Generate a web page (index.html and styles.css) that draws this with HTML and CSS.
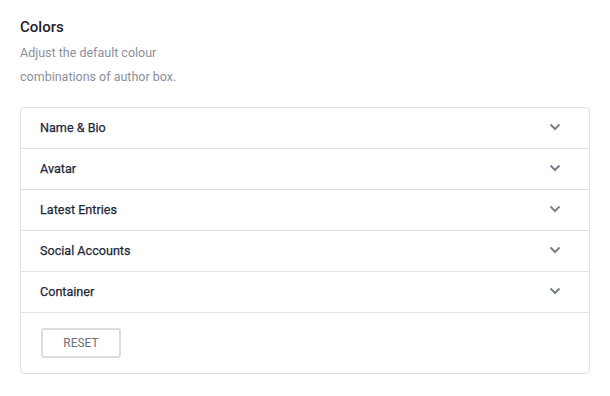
FILE: index.html
```html
<!DOCTYPE html>
<html>
<head>
<meta charset="utf-8">
<link rel="stylesheet" href="styles.css">
</head>
<body>
<div class="panel">
  <h2 class="title">Colors</h2>
  <p class="desc">Adjust the default colour<br>combinations of author box.</p>
  <div class="card">
    <div class="row"><span>Name &amp; Bio</span><svg class="chev" viewBox="0 0 12 8" width="12" height="8"><path d="M1.5 1.5 L6 6 L10.5 1.5" fill="none" stroke="currentColor" stroke-width="2"/></svg></div>
    <div class="row"><span>Avatar</span><svg class="chev" viewBox="0 0 12 8" width="12" height="8"><path d="M1.5 1.5 L6 6 L10.5 1.5" fill="none" stroke="currentColor" stroke-width="2"/></svg></div>
    <div class="row"><span>Latest Entries</span><svg class="chev" viewBox="0 0 12 8" width="12" height="8"><path d="M1.5 1.5 L6 6 L10.5 1.5" fill="none" stroke="currentColor" stroke-width="2"/></svg></div>
    <div class="row"><span>Social Accounts</span><svg class="chev" viewBox="0 0 12 8" width="12" height="8"><path d="M1.5 1.5 L6 6 L10.5 1.5" fill="none" stroke="currentColor" stroke-width="2"/></svg></div>
    <div class="row"><span>Container</span><svg class="chev" viewBox="0 0 12 8" width="12" height="8"><path d="M1.5 1.5 L6 6 L10.5 1.5" fill="none" stroke="currentColor" stroke-width="2"/></svg></div>
    <div class="footer"><button class="reset">RESET</button></div>
  </div>
</div>
</body>
</html>
```
FILE: styles.css
```css
html, body { margin: 0; padding: 0; background: #fff; }
body { font-family: Roboto, "Liberation Sans", sans-serif; }
.panel { padding: 17px 20px 0 20px; width: 570px; }
.title { margin: 0; font-size: 15px; font-weight: 500; color: #1d2327; line-height: 20px; }
.desc { margin: 4px 0 0 0; font-size: 12.5px; line-height: 24px; color: #8a909b; }
.card { margin-top: 18px; border: 1px solid #e2e2e2; border-radius: 4px; }
.row { height: 38px; padding: 0 28px 2px 19px; border-bottom: 1px solid #e2e2e2; display: flex; align-items: center; justify-content: space-between; font-size: 12.6px; color: #1e2838; }
.row span { font-weight: 400; -webkit-text-stroke: 0.25px #1e2838; }
.chev { color: #79808c; }
.footer { padding: 15px 20px 15px 20px; }
.reset { width: 80px; height: 30px; border: 2px solid #dcdcdc; border-radius: 3px; background: #fff; font-family: Roboto, "Liberation Sans", sans-serif; font-size: 12px; color: #6d7178; padding: 0; }
```
